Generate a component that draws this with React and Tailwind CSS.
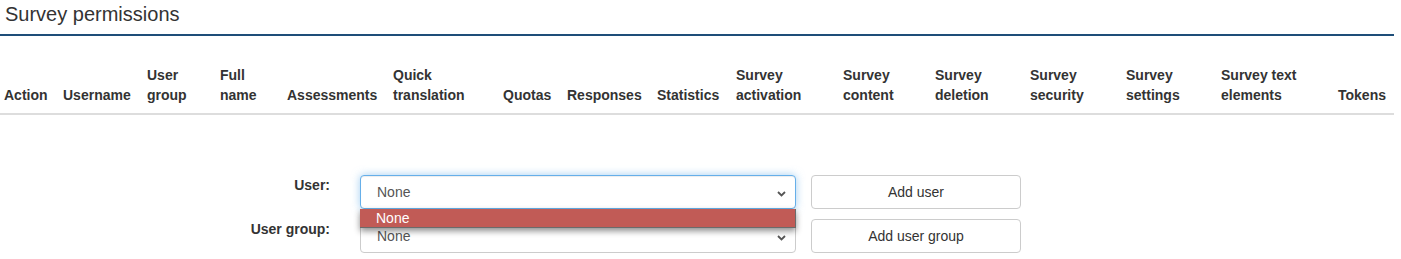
import React from "react";

const columns = [
  ["Action", "w-[59px]"],
  ["Username", "w-[84px]"],
  ["User group", "w-[73px]"],
  ["Full name", "w-[67px]"],
  ["Assessments", "w-[106px]"],
  ["Quick translation", "w-[110px]"],
  ["Quotas", "w-[64px]"],
  ["Responses", "w-[90px]"],
  ["Statistics", "w-[79px]"],
  ["Survey activation", "w-[107px]"],
  ["Survey content", "w-[92px]"],
  ["Survey deletion", "w-[95px]"],
  ["Survey security", "w-[96px]"],
  ["Survey settings", "w-[95px]"],
  ["Survey text elements", "w-[117px]"],
  ["Tokens", "w-[60px]"],
];

const Chevron = () => (
  <svg width="9" height="6" viewBox="0 0 9 6" className="absolute right-[9px] top-[15px]">
    <path d="M1 1 L4.5 4.5 L8 1" fill="none" stroke="#555" strokeWidth="1.8" />
  </svg>
);

const SelectBox = ({ focused }) => (
  <div
    className={
      "relative w-[436px] h-[34px] rounded-[4px] border bg-white pl-[16px] leading-[32px] text-[14px] text-[#555] " +
      (focused
        ? "border-[#66afe9] shadow-[inset_0_1px_1px_rgba(0,0,0,0.075),0_0_8px_rgba(102,175,233,0.6)]"
        : "border-[#ccc]")
    }
  >
    None
    <Chevron />
  </div>
);

const Button = ({ children }) => (
  <div className="w-[210px] h-[34px] rounded-[4px] border border-[#ccc] bg-white text-center leading-[32px] text-[14px] text-[#333]">
    {children}
  </div>
);

export default function App() {
  return (
    <div className="w-[1401px] h-[259px] bg-white overflow-hidden font-['Liberation_Sans',Arial,sans-serif] text-[#333]">
      <div className="w-[1394px] border-b-2 border-[#1e4e79] pb-[6px]">
        <h2 className="pl-[5px] text-[20px] leading-[28px] font-normal text-[#333]">
          Survey permissions
        </h2>
      </div>

      <table className="mt-[21px] w-[1394px] table-fixed border-collapse">
        <thead>
          <tr className="border-b-2 border-[#ddd]">
            {columns.map(([label, w]) => (
              <th
                key={label}
                className={w + " pl-[4px] pr-[2px] pt-[8px] pb-[8px] text-left align-bottom text-[14px] leading-[20px] font-bold text-[#333]"}
              >
                {label}
              </th>
            ))}
          </tr>
        </thead>
      </table>

      <div className="mt-[60px] flex flex-col gap-[10px]">
        <div className="flex">
          <div className="w-[330px] text-right text-[14px] leading-[20px] font-bold">User:</div>
          <div className="relative ml-[30px]">
            <SelectBox focused />
            <div className="absolute left-0 top-[34px] z-10 w-[436px] h-[19px] bg-[#c15b56] border-b border-r border-[#6b6b6b] pl-[16px] text-[14px] leading-[18px] text-white shadow-[0_3px_6px_rgba(0,0,0,0.45)]">
              None
            </div>
          </div>
          <div className="ml-[15px]">
            <Button>Add user</Button>
          </div>
        </div>
        <div className="flex">
          <div className="w-[330px] text-right text-[14px] leading-[20px] font-bold">User group:</div>
          <div className="ml-[30px]">
            <SelectBox />
          </div>
          <div className="ml-[15px]">
            <Button>Add user group</Button>
          </div>
        </div>
      </div>
    </div>
  );
}
